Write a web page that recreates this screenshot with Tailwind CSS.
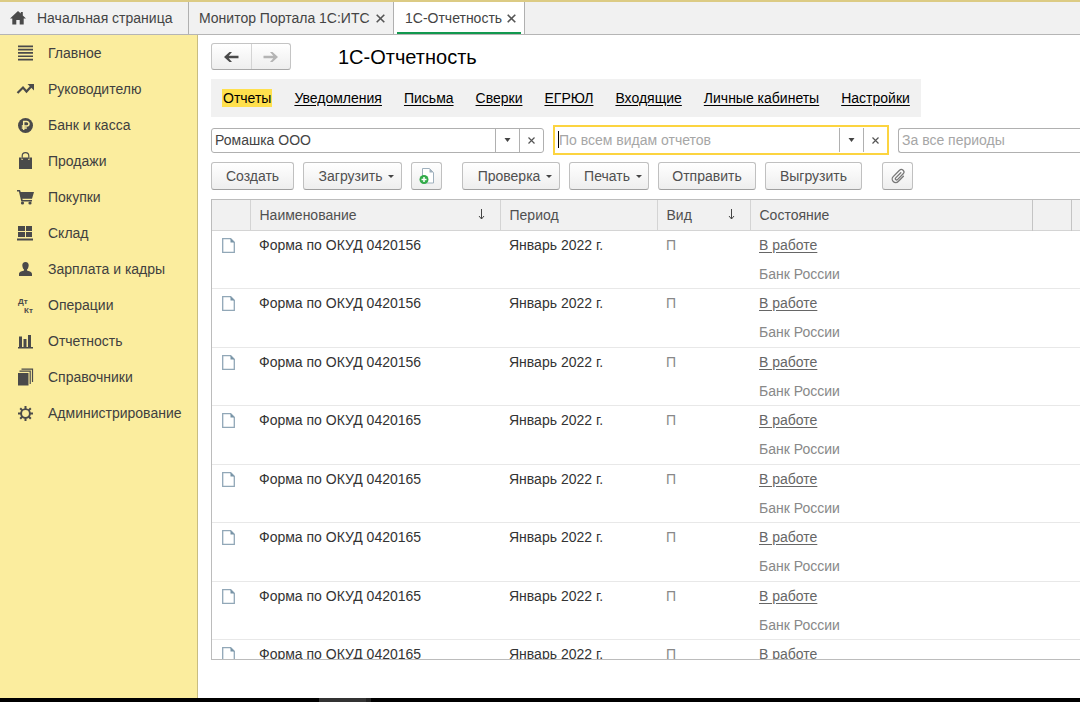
<!DOCTYPE html>
<html lang="ru">
  <head>
    <meta charset="UTF-8" />
    <meta name="viewport" content="width=device-width, initial-scale=1.0" />
    <title>1С-Отчетность</title>
    <script src="https://cdn.jsdelivr.net/npm/@tailwindcss/browser@4"></script>
  </head>
  <body class="h-screen flex flex-col overflow-hidden bg-white text-sm text-[#444] font-['Liberation_Sans',Arial,sans-serif]">
    <!-- Tabs -->
    <header class="flex h-[35px] shrink-0 border-t-2 border-t-[#dccb84] border-b border-b-[#b5b5b5] bg-[#f1f1f1] whitespace-nowrap">
      <a href="#" class="flex items-center w-[189px] pl-[10px] gap-[11px] border-r border-[#b0b0b0]">
        <svg class="w-4 h-4" viewBox="0 0 16 16" fill="#4a4a4a"><path d="M8 1 0 8.500h2.300V14.500h4V10h3.400v4.500h4V8.500H16L12.800 5.500V2h-2v1.600z" /></svg>
        Начальная страница
      </a>
      <div class="flex items-center justify-between w-[205px] pl-[10px] pr-2 border-r border-[#b0b0b0]">
        <a href="#">Монитор Портала 1С:ИТС</a>
        <button aria-label="Закрыть вкладку">
          <svg class="w-[9px] h-[9px]" viewBox="0 0 9 9" stroke="#555" stroke-width="1.6"><path d="M.7.7l7.600 7.600M8.300.7.7 8.300" /></svg>
        </button>
      </div>
      <div class="flex flex-col w-[131px] px-[3px] bg-white border-r border-[#b0b0b0]">
        <div class="flex flex-1 items-center justify-between pt-[2px] pl-2 pr-[5px] border-b-2 border-[#12994f]">
          <a href="#">1С-Отчетность</a>
          <button aria-label="Закрыть вкладку">
            <svg class="w-[9px] h-[9px]" viewBox="0 0 9 9" stroke="#555" stroke-width="1.6"><path d="M.7.7l7.600 7.600M8.300.7.7 8.300" /></svg>
          </button>
        </div>
      </div>
    </header>

    <div class="flex flex-1 min-h-0">
      <!-- Sections -->
      <nav class="w-[198px] shrink-0 border-r border-[#c9bd80] bg-[#fbed9e] text-[#404040]">
        <a href="#" class="flex items-center h-9 pl-4 gap-[14px]">
          <svg class="w-[18px] h-[18px]" viewBox="0 0 18 18" fill="#4a4a4a"><path d="M2 1.500h15v1.700H2zM2 4.800h15v1.700H2zM2 8.100h15v1.700H2zM2 11.400h15v1.700H2zM2 14.700h15v1.700H2z" /></svg>
          Главное
        </a>
        <a href="#" class="flex items-center h-9 pl-4 gap-[14px]">
          <svg class="w-[18px] h-[18px]" viewBox="0 0 18 18" fill="none" stroke="#4a4a4a" stroke-width="2.200"><path d="M1.500 13 7 7.500l3.500 4L16 5.500" /><path d="M11.500 4H18v6.500z" fill="#4a4a4a" stroke="none" /></svg>
          Руководителю
        </a>
        <a href="#" class="flex items-center h-9 pl-4 gap-[14px]">
          <svg class="w-[18px] h-[18px]" viewBox="0 0 18 18"><circle cx="9.500" cy="9.500" r="7.500" fill="#4a4a4a" /><path d="M7.700 14V5.500h3a2.300 2.300 0 0 1 0 4.600H5.800M5.800 12h5" fill="none" stroke="#fbed9e" stroke-width="1.500" /></svg>
          Банк и касса
        </a>
        <a href="#" class="flex items-center h-9 pl-4 gap-[14px]">
          <svg class="w-[18px] h-[18px]" viewBox="0 0 18 18"><path d="M3 5.500h2.500V8h1.200V5.500h5.600V8h1.200V5.500H16V17H3z" fill="#4a4a4a" /><path d="M6.200 7V4a3.300 3.300 0 0 1 6.600 0v3" fill="none" stroke="#4a4a4a" stroke-width="1.200" /></svg>
          Продажи
        </a>
        <a href="#" class="flex items-center h-9 pl-4 gap-[14px]">
          <svg class="w-[18px] h-[18px]" viewBox="0 0 18 18" fill="#4a4a4a"><path d="M1 2h3l.7 2H18l-2 6.800H6.300l.4 1.200H16v1.400H5.300L2.900 3.400H1z" /><circle cx="6.500" cy="15" r="1.600" /><circle cx="14" cy="15" r="1.600" /></svg>
          Покупки
        </a>
        <a href="#" class="flex items-center h-9 pl-4 gap-[14px]">
          <svg class="w-[18px] h-[18px]" viewBox="0 0 18 18" fill="#4a4a4a"><path d="M2 2h7v5H2zM10 2h6v5h-6zM2 8h7v5H2zM10 8h6v5h-6zM1 14.500h16v2H1z" /></svg>
          Склад
        </a>
        <a href="#" class="flex items-center h-9 pl-4 gap-[14px]">
          <svg class="w-[18px] h-[18px]" viewBox="0 0 18 18" fill="#4a4a4a"><path d="M9.500 2c2.200 0 3.200 1.400 3.200 3.200S11.700 9 11 9.600v1c1.500.5 5 1.200 5 3.400v2H3v-2c0-2.200 3.500-2.900 5-3.400v-1C7.300 9 6.300 7 6.300 5.200S7.300 2 9.500 2z" /></svg>
          Зарплата и кадры
        </a>
        <a href="#" class="flex items-center h-9 pl-4 gap-[14px]">
          <svg class="w-[18px] h-[18px]" viewBox="0 0 18 18" fill="#4a4a4a" font-size="8" font-weight="bold"><text x="2" y="8">Дт</text><text x="8" y="17">Кт</text></svg>
          Операции
        </a>
        <a href="#" class="flex items-center h-9 pl-4 gap-[14px]">
          <svg class="w-[18px] h-[18px]" viewBox="0 0 18 18" fill="#4a4a4a"><path d="M3 4.500h3V15h1.500V7h3v8H12V3h3v12h2v1.500H2V15h1z" /></svg>
          Отчетность
        </a>
        <a href="#" class="flex items-center h-9 pl-4 gap-[14px]">
          <svg class="w-[18px] h-[18px]" viewBox="0 0 18 18"><path d="M2 5h10.500v12.500H2z" fill="#4a4a4a" /><path d="M3.500 3.200h10.700V16M5.500 1.200h11V14" fill="none" stroke="#4a4a4a" stroke-width="1.200" /></svg>
          Справочники
        </a>
        <a href="#" class="flex items-center h-9 pl-4 gap-[14px]">
          <svg class="w-[18px] h-[18px]" viewBox="0 0 18 18" fill="none" stroke="#4a4a4a"><circle cx="9.500" cy="9.500" r="4.400" stroke-width="1.900" /><path d="M9.500 2v3M9.500 14v3M2 9.500h3M14 9.500h3M4.200 4.200l2 2M12.800 12.800l2 2M4.200 14.800l2-2M12.800 6.200l2-2" stroke-width="2" /></svg>
          Администрирование
        </a>
      </nav>

      <main class="flex flex-col flex-1 min-w-0 pl-[13px] pt-2 pb-[38px]">
        <div class="flex items-center gap-[47px] h-[27px]">
          <div class="flex h-[27px] w-20 rounded-[3px] border border-[#c4c4c4] border-b-[#a8a8a8] bg-linear-to-b from-white to-[#eee]">
            <button class="flex flex-1 items-center justify-center border-r border-[#d4d4d4]" aria-label="Назад">
              <svg class="w-4 h-3" viewBox="0 0 16 12" fill="#4a4a4a"><path d="M1 6 6.500 1H9L5.700 4.800H15.500v2.400H5.700L9 11H6.500z" /></svg>
            </button>
            <button class="flex flex-1 items-center justify-center" aria-label="Вперед">
              <svg class="w-4 h-3" viewBox="0 0 16 12" fill="#b4b4b4"><path d="M15 6 9.500 1H7l3.300 3.800H.5v2.400h9.800L7 11h2.500z" /></svg>
            </button>
          </div>
          <h1 class="text-xl text-black">1С-Отчетность</h1>
        </div>

        <nav class="flex items-center self-start gap-[22px] h-[38px] mt-[9px] px-[11px] bg-[#f1f1f1] text-black whitespace-nowrap">
          <a href="#" class="bg-[#ffe04d] px-px leading-[18px]">Отчеты</a>
          <a href="#" class="underline underline-offset-2">Уведомления</a>
          <a href="#" class="underline underline-offset-2">Письма</a>
          <a href="#" class="underline underline-offset-2">Сверки</a>
          <a href="#" class="underline underline-offset-2">ЕГРЮЛ</a>
          <a href="#" class="underline underline-offset-2">Входящие</a>
          <a href="#" class="underline underline-offset-2">Личные кабинеты</a>
          <a href="#" class="underline underline-offset-2">Настройки</a>
        </nav>

        <!-- Filters -->
        <div class="flex items-center gap-[9px] h-[30px] mt-2 shrink-0">
          <div class="flex w-[333px] h-[25px] shrink-0 rounded-[3px] border border-[#b0b0b0]">
            <input type="text" aria-label="Организация" value="Ромашка ООО" class="flex-1 min-w-0 pl-[3px] outline-none" />
            <button class="flex items-center justify-center w-6 border-l border-[#b0b0b0]" aria-label="Выбрать организацию">
              <svg class="w-[7px] h-1" viewBox="0 0 7 4" fill="#444"><path d="M.5 0h6l-3 4z" /></svg>
            </button>
            <button class="flex items-center justify-center w-6 border-l border-[#b0b0b0]" aria-label="Очистить организацию">
              <svg class="w-[7px] h-[7px]" viewBox="0 0 7 7" stroke="#555" stroke-width="1.200"><path d="M.5.5l6 6M6.500.5l-6 6" /></svg>
            </button>
          </div>
          <div class="relative flex w-[336px] h-[30px] py-px shrink-0 border-2 border-[#fcd440]">
            <input type="text" aria-label="Вид отчета" placeholder="По всем видам отчетов" class="flex-1 min-w-0 pl-1 outline-none placeholder:text-[#a6a6a6]" />
            <span class="absolute left-[3px] top-1 w-px h-[17px] bg-black"></span>
            <button class="flex items-center justify-center w-6 border-l border-[#b0b0b0]" aria-label="Выбрать вид отчета">
              <svg class="w-[7px] h-1" viewBox="0 0 7 4" fill="#444"><path d="M.5 0h6l-3 4z" /></svg>
            </button>
            <button class="flex items-center justify-center w-6 border-l border-[#b0b0b0]" aria-label="Очистить вид отчета">
              <svg class="w-[7px] h-[7px]" viewBox="0 0 7 7" stroke="#555" stroke-width="1.200"><path d="M.5.5l6 6M6.500.5l-6 6" /></svg>
            </button>
          </div>
          <input type="text" aria-label="Период" placeholder="За все периоды" class="flex-1 min-w-0 h-[25px] pl-[3px] rounded-l-[3px] border border-r-0 border-[#b0b0b0] outline-none placeholder:text-[#a6a6a6]" />
        </div>

        <!-- Commands -->
        <div class="flex gap-[9px] h-7 mt-[7px] shrink-0 text-[#505050]">
          <button class="w-[83px] rounded-[3px] border border-[#c0c0c0] border-b-[#a0a0a0] bg-linear-to-b from-white to-[#eee]">Создать</button>
          <button class="flex items-center justify-center gap-[6px] w-[99px] pl-2 rounded-[3px] border border-[#c0c0c0] border-b-[#a0a0a0] bg-linear-to-b from-white to-[#eee]">
            Загрузить
            <svg class="w-[6px] h-[3px]" viewBox="0 0 6 3" fill="#444"><path d="M0 0h6L3 3z" /></svg>
          </button>
          <button class="flex items-center justify-center w-[31px] rounded-[3px] border border-[#c0c0c0] border-b-[#a0a0a0] bg-linear-to-b from-white to-[#eee]" aria-label="Создать по шаблону">
            <svg class="w-4 h-[18px]" viewBox="0 0 16 18"><path d="M3.500 1.500h7l4 4v10.500h-11z" fill="#fff" stroke="#9fb0bd" /><path d="M10.500 1.500v4h4z" fill="#9fb0bd" /><circle cx="5" cy="12.500" r="4.500" fill="#32ab49" /><path d="M5 10v5M2.500 12.500h5" stroke="#fff" stroke-width="1.500" /></svg>
          </button>
          <button class="flex items-center justify-center gap-[6px] w-[98px] ml-[11px] pl-2 rounded-[3px] border border-[#c0c0c0] border-b-[#a0a0a0] bg-linear-to-b from-white to-[#eee]">
            Проверка
            <svg class="w-[6px] h-[3px]" viewBox="0 0 6 3" fill="#444"><path d="M0 0h6L3 3z" /></svg>
          </button>
          <button class="flex items-center justify-center gap-[6px] w-20 pl-2 rounded-[3px] border border-[#c0c0c0] border-b-[#a0a0a0] bg-linear-to-b from-white to-[#eee]">
            Печать
            <svg class="w-[6px] h-[3px]" viewBox="0 0 6 3" fill="#444"><path d="M0 0h6L3 3z" /></svg>
          </button>
          <button class="w-[98px] rounded-[3px] border border-[#c0c0c0] border-b-[#a0a0a0] bg-linear-to-b from-white to-[#eee]">Отправить</button>
          <button class="w-[97px] rounded-[3px] border border-[#c0c0c0] border-b-[#a0a0a0] bg-linear-to-b from-white to-[#eee]">Выгрузить</button>
          <button class="flex items-center justify-center w-[31px] ml-[11px] rounded-[3px] border border-[#c0c0c0] border-b-[#a0a0a0] bg-linear-to-b from-white to-[#eee]" aria-label="Присоединенные файлы">
            <svg class="w-4 h-4" viewBox="0 0 16 16" fill="none" stroke="#777" stroke-width="1.300" stroke-linecap="round"><path d="M10.800 4.800 5.700 9.900a1.200 1.200 0 0 0 1.800 1.700l5.700-5.800a2.500 2.500 0 0 0-3.700-3.500L3.200 8.600a3.500 3.500 0 0 0 5 4.900l5.200-5.200" /></svg>
          </button>
        </div>

        <!-- Reports -->
        <div class="flex-1 min-h-0 mt-[9px] overflow-hidden border border-r-0 border-[#bcbcbc]">
          <table class="w-full table-fixed text-left whitespace-nowrap">
            <thead class="bg-[#f1f1f1] text-[#505050]">
              <tr class="h-[30px] border-b border-[#d4d4d4]">
                <th class="w-[38px] border-r border-[#d4d4d4]"></th>
                <th class="w-[250px] pl-[9px] pr-[15px] font-normal border-r border-[#d4d4d4]">
                  <div class="flex items-center justify-between">
                    Наименование
                    <svg class="w-[7px] h-[11px]" viewBox="0 0 7 11" fill="none" stroke="#444"><path d="M3.500 0v10M1 7l2.500 3L6 7" /></svg>
                  </div>
                </th>
                <th class="w-[157px] pl-[9px] font-normal border-r border-[#d4d4d4]">Период</th>
                <th class="w-[93px] pl-[9px] pr-[15px] font-normal border-r border-[#d4d4d4]">
                  <div class="flex items-center justify-between">
                    Вид
                    <svg class="w-[7px] h-[11px]" viewBox="0 0 7 11" fill="none" stroke="#444"><path d="M3.500 0v10M1 7l2.500 3L6 7" /></svg>
                  </div>
                </th>
                <th class="w-[282px] pl-[9px] font-normal border-r border-[#c4c4c4]">Состояние</th>
                <th class="w-[39px] border-r border-[#c4c4c4]"></th>
                <th></th>
              </tr>
            </thead>
            <tbody id="reports"></tbody>
          </table>
        </div>
      </main>
    </div>

    <footer class="flex h-1 shrink-0 bg-black">
      <div class="w-[47px] ml-[319px] bg-[#333]"></div>
      <div class="w-[5px] bg-[#222]"></div>
    </footer>

    <script>
      const codes = ["0420156", "0420156", "0420156", "0420165", "0420165", "0420165", "0420165", "0420165"];

      document.getElementById("reports").innerHTML = codes
        .map(
          (code) => `
          <tr class="odd:h-[58px] even:h-[59px] align-top border-b border-[#e8e8e8] leading-[28px]">
            <td class="pl-[10px] pt-[7px]">
              <svg class="w-[13px] h-[15px]" viewBox="0 0 13 15"><path d="M.7.7h8l3.600 3.600v10H.7z" fill="#fff" stroke="#91a7b7" stroke-width="1.300" /><path d="M8.500.5v4h4z" fill="#7793a6" /></svg>
            </td>
            <td class="pl-[9px] text-[#333]">Форма по ОКУД ${code}</td>
            <td class="pl-[9px] text-[#333]">Январь 2022 г.</td>
            <td class="pl-[9px] text-[#888]">П</td>
            <td class="pl-[9px] text-[#888]">
              <a href="#" class="block text-[#666] underline underline-offset-2">В работе</a>
              <div class="mt-px">Банк России</div>
            </td>
            <td></td>
            <td></td>
          </tr>`
        )
        .join("");
    </script>
  </body>
</html>
